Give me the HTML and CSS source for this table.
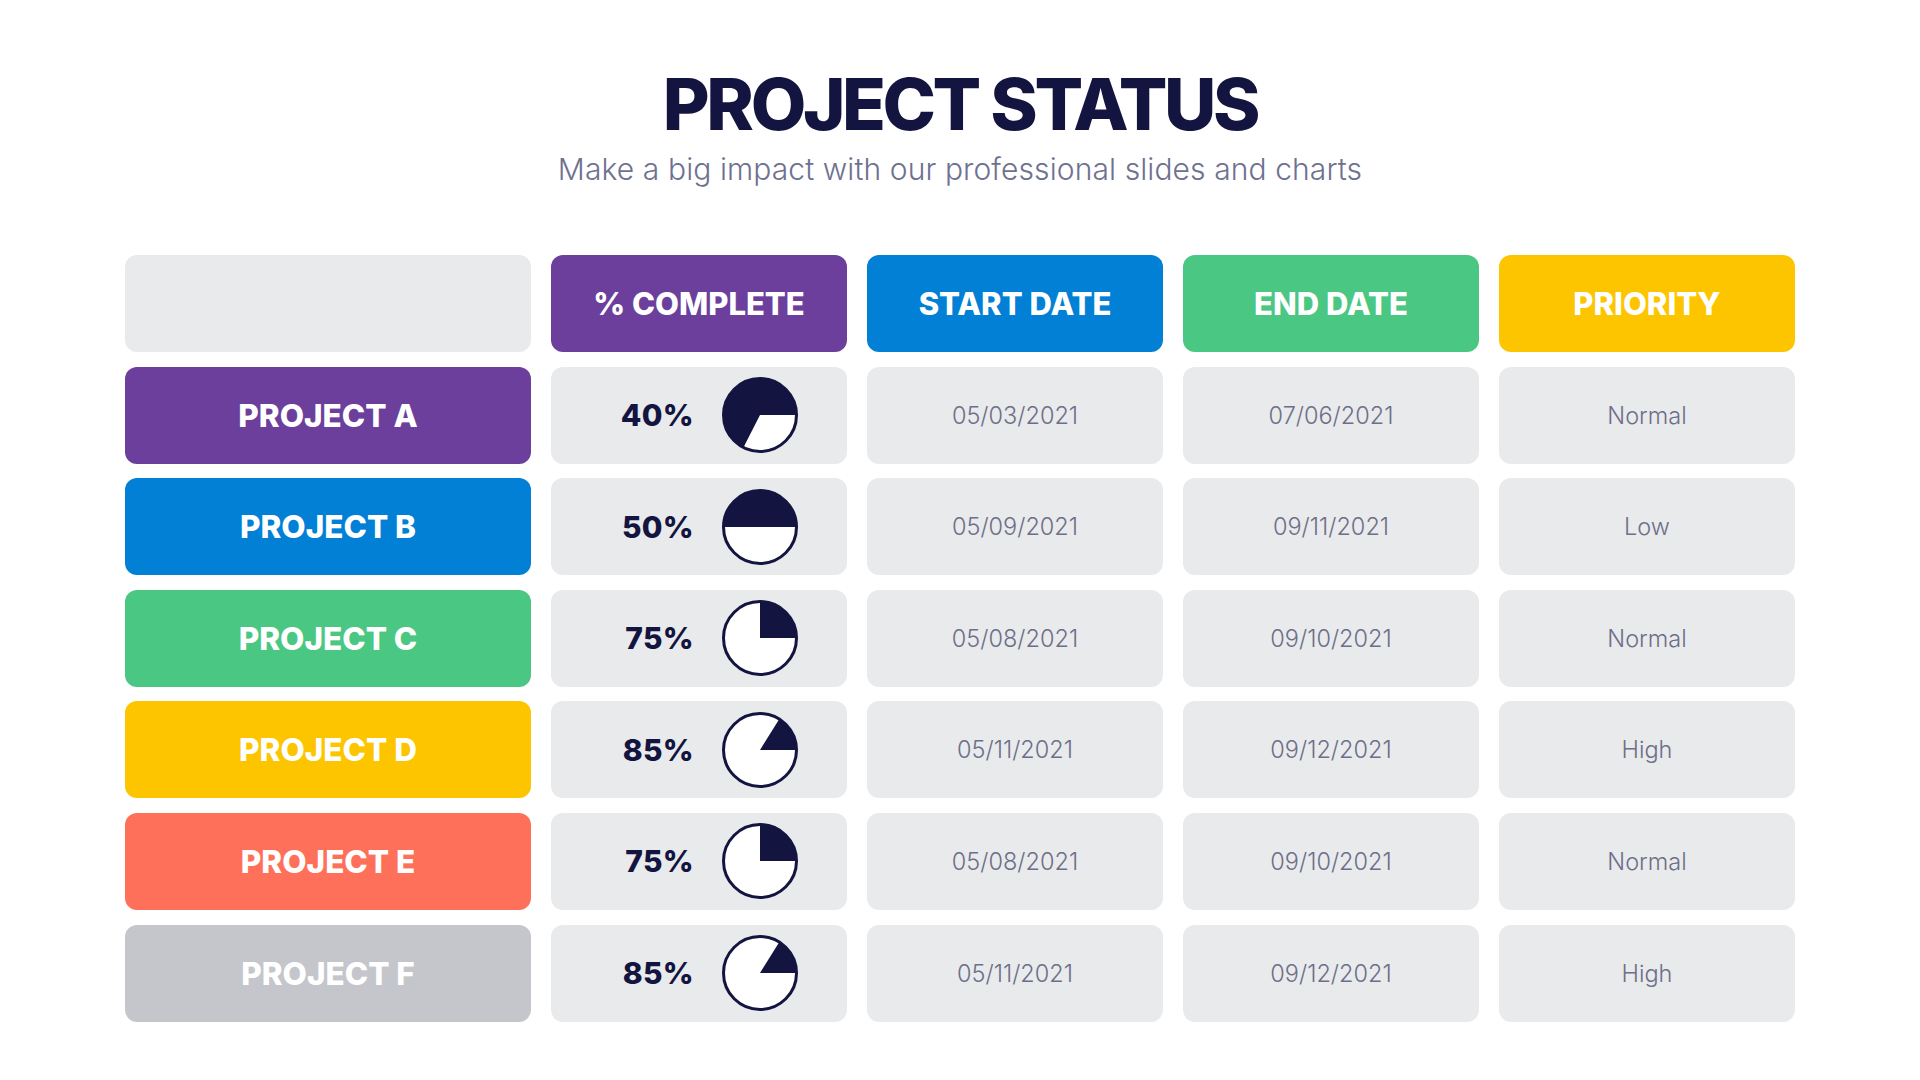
FILE: index.html
```html
<!DOCTYPE html>
<html lang="en">
<head>
<meta charset="utf-8">
<title>Project Status</title>
<link rel="stylesheet" href="styles.css">
</head>
<body>
<main class="page">
  <header class="heading">
    <h1 class="title">PROJECT STATUS</h1>
    <p class="subtitle">Make a big impact with our professional slides and charts</p>
  </header>

  <section class="table">
    <div class="cell blank"></div>
    <div class="cell head purple">% COMPLETE</div>
    <div class="cell head blue">START DATE</div>
    <div class="cell head green">END DATE</div>
    <div class="cell head yellow">PRIORITY</div>

    <div class="cell label purple">PROJECT A</div>
    <div class="cell pct"><span class="pct-text">40%</span>
      <svg class="pie" viewBox="0 0 76 76"><circle cx="38" cy="38" r="36.5" class="pie-bg"/><path class="pie-fill" d="M38 38 L21.43 70.52 A36.5 36.5 0 1 1 74.5 38 Z"/><circle cx="38" cy="38" r="36.5" class="pie-ring"/></svg></div>
    <div class="cell data">05/03/2021</div>
    <div class="cell data">07/06/2021</div>
    <div class="cell data">Normal</div>

    <div class="cell label blue">PROJECT B</div>
    <div class="cell pct"><span class="pct-text">50%</span>
      <svg class="pie" viewBox="0 0 76 76"><circle cx="38" cy="38" r="36.5" class="pie-bg"/><path class="pie-fill" d="M1.5 38 A36.5 36.5 0 0 1 74.5 38 Z"/><circle cx="38" cy="38" r="36.5" class="pie-ring"/></svg></div>
    <div class="cell data">05/09/2021</div>
    <div class="cell data">09/11/2021</div>
    <div class="cell data">Low</div>

    <div class="cell label green">PROJECT C</div>
    <div class="cell pct"><span class="pct-text">75%</span>
      <svg class="pie" viewBox="0 0 76 76"><circle cx="38" cy="38" r="36.5" class="pie-bg"/><path class="pie-fill" d="M38 38 L38 1.5 A36.5 36.5 0 0 1 74.5 38 Z"/><circle cx="38" cy="38" r="36.5" class="pie-ring"/></svg></div>
    <div class="cell data">05/08/2021</div>
    <div class="cell data">09/10/2021</div>
    <div class="cell data">Normal</div>

    <div class="cell label yellow">PROJECT D</div>
    <div class="cell pct"><span class="pct-text">85%</span>
      <svg class="pie" viewBox="0 0 76 76"><circle cx="38" cy="38" r="36.5" class="pie-bg"/><path class="pie-fill" d="M38 38 L57.34 7.05 A36.5 36.5 0 0 1 74.5 38 Z"/><circle cx="38" cy="38" r="36.5" class="pie-ring"/></svg></div>
    <div class="cell data">05/11/2021</div>
    <div class="cell data">09/12/2021</div>
    <div class="cell data">High</div>

    <div class="cell label coral">PROJECT E</div>
    <div class="cell pct"><span class="pct-text">75%</span>
      <svg class="pie" viewBox="0 0 76 76"><circle cx="38" cy="38" r="36.5" class="pie-bg"/><path class="pie-fill" d="M38 38 L38 1.5 A36.5 36.5 0 0 1 74.5 38 Z"/><circle cx="38" cy="38" r="36.5" class="pie-ring"/></svg></div>
    <div class="cell data">05/08/2021</div>
    <div class="cell data">09/10/2021</div>
    <div class="cell data">Normal</div>

    <div class="cell label grey">PROJECT F</div>
    <div class="cell pct"><span class="pct-text">85%</span>
      <svg class="pie" viewBox="0 0 76 76"><circle cx="38" cy="38" r="36.5" class="pie-bg"/><path class="pie-fill" d="M38 38 L57.34 7.05 A36.5 36.5 0 0 1 74.5 38 Z"/><circle cx="38" cy="38" r="36.5" class="pie-ring"/></svg></div>
    <div class="cell data">05/11/2021</div>
    <div class="cell data">09/12/2021</div>
    <div class="cell data">High</div>
  </section>
</main>
</body>
</html>
```

FILE: styles.css
```css
html, body {
  margin: 0;
  padding: 0;
  background: #ffffff;
}

body {
  font-family: "Inter", "Noto Sans", "Liberation Sans", sans-serif;
  width: 1920px;
  height: 1080px;
  overflow: hidden;
}

.page {
  padding-top: 68px;
  display: flex;
  flex-direction: column;
  align-items: center;
}

.heading {
  display: flex;
  flex-direction: column;
  align-items: center;
}

.title {
  margin: 0;
  font-size: 72px;
  line-height: 72px;
  font-weight: 800;
  letter-spacing: -3.4px;
  color: #13143f;
}

.subtitle {
  margin: 14px 0 0;
  font-size: 30px;
  line-height: 30px;
  font-weight: 300;
  letter-spacing: 0.1px;
  color: #6e7190;
}

.table {
  margin-top: 71px;
  display: grid;
  grid-template-columns: 406px repeat(4, 296px);
  grid-auto-rows: 97px;
  column-gap: 20px;
  row-gap: 14.6px;
}

.cell {
  border-radius: 12px;
  background: #e9eaec;
  display: flex;
  align-items: center;
  justify-content: center;
}

.head, .label {
  color: #ffffff;
  font-size: 31px;
  font-weight: 800;
  letter-spacing: 0;
}

.label {
  font-size: 31.5px;
}

.purple { background: #6b3f9b; }
.blue { background: #0180d6; }
.green { background: #4bc784; }
.yellow { background: #fcc500; }
.coral { background: #fe705a; }
.grey { background: #c4c6cb; }

.data {
  font-size: 23.5px;
  font-weight: 300;
  color: #6d6f88;
  letter-spacing: 0;
}

.pct {
  justify-content: flex-end;
  padding-right: 49px;
  gap: 28px;
}

.pct-text {
  font-size: 30px;
  font-weight: 800;
  color: #13143f;
  letter-spacing: 0.3px;
}

.pie {
  width: 76px;
  height: 76px;
  display: block;
}

.pie-bg { fill: #ffffff; }
.pie-fill { fill: #13143f; }
.pie-ring { fill: none; stroke: #13143f; stroke-width: 3; }
```
